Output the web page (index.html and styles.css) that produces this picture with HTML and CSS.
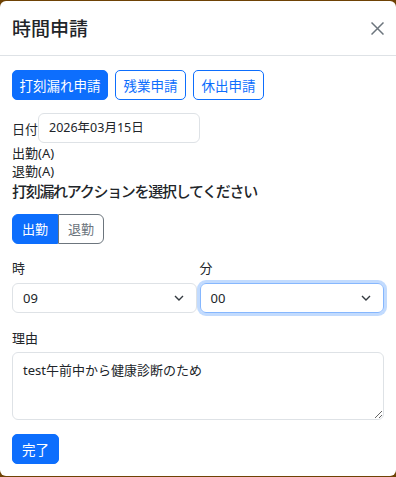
FILE: index.html
```html
<!DOCTYPE html>
<html>
  <head>
    <title>時間申請</title>
    <link rel="stylesheet" href="styles.css">
  </head>
  <body>
    <div class="modal">

      <div class="modal-header">
        <p class="modal-title">時間申請</p>
        <button class="btn-close">
          <svg width="13" height="13" viewBox="0 0 13 13">
            <path d="M0.5 0.5 L12.5 12.5 M12.5 0.5 L0.5 12.5" stroke="#6c757d" stroke-width="1.5" fill="none"/>
          </svg>
        </button>
      </div>

      <div class="modal-body">

        <div class="type-tabs">
          <button class="btn btn-primary btn-wide">打刻漏れ申請</button>
          <button class="btn btn-outline">残業申請</button>
          <button class="btn btn-outline">休出申請</button>
        </div>

        <div class="date-row">
          <span class="date-label">日付</span>
          <div class="date-input">2026年03月15日</div>
        </div>

        <div class="punch-info">
          <p>出勤(A)</p>
          <p>退勤(A)</p>
        </div>

        <p class="section-title">打刻漏れアクションを選択してください</p>

        <div class="btn-group">
          <button class="toggle toggle-active">出勤</button>
          <button class="toggle">退勤</button>
        </div>

        <div class="time-row">
          <div class="time-col">
            <p class="field-label">時</p>
            <div class="select">
              <span>09</span>
              <svg width="10" height="6" viewBox="0 0 10 6">
                <path d="M1 1 L5 5 L9 1" stroke="#343a40" stroke-width="1.4" fill="none"/>
              </svg>
            </div>
          </div>
          <div class="time-col">
            <p class="field-label">分</p>
            <div class="select select-focus">
              <span>00</span>
              <svg width="10" height="6" viewBox="0 0 10 6">
                <path d="M1 1 L5 5 L9 1" stroke="#343a40" stroke-width="1.4" fill="none"/>
              </svg>
            </div>
          </div>
        </div>

        <p class="field-label reason-label">理由</p>
        <textarea class="reason">test午前中から健康診断のため</textarea>

        <button class="btn btn-primary btn-submit">完了</button>

      </div>
    </div>
  </body>
</html>
```

FILE: styles.css
```css
body {
  margin: 0;
  background-color: #6e4204;
  font-family: "Noto Sans", "Noto Sans CJK JP", sans-serif;
  color: #212529;
}

p {
  margin: 0;
}

.modal {
  margin-top: 1px;
  background-color: white;
  border-radius: 6px;
  height: 475px;
  overflow: hidden;
}

.modal-header {
  display: flex;
  justify-content: space-between;
  align-items: center;
  padding: 12px;
  border-bottom: 1px solid #dee2e6;
}

.modal-title {
  font-family: "Noto Sans CJK JP", sans-serif;
  font-size: 19px;
  font-weight: 500;
  line-height: 30px;
}

.btn-close {
  background: transparent;
  border: none;
  padding: 0;
  width: 13px;
  height: 13px;
  display: flex;
}

.modal-body {
  padding: 14px 12px 12px 12px;
}

.type-tabs {
  display: flex;
  gap: 7px;
}

.btn {
  font-family: "Noto Sans CJK JP", sans-serif;
  font-size: 13.5px;
  line-height: 20px;
  padding: 4px 7.5px;
  border-radius: 5px;
  border: 1px solid #0d6efd;
  background-color: white;
  color: #0d6efd;
}

.btn-primary {
  background-color: #0d6efd;
  color: white;
}

.btn-wide {
  padding: 4px 6px;
  width: 96px;
}

.date-row {
  display: flex;
  align-items: center;
  margin-top: 13px;
  font-size: 13px;
}

.date-label {
  width: 26px;
  font-family: "Noto Sans CJK JP", sans-serif;
}

.date-input {
  width: 150px;
  height: 28px;
  line-height: 28px;
  padding-left: 10px;
  border: 1px solid #dee2e6;
  border-radius: 6px;
  font-size: 12.5px;
}

.punch-info {
  margin-top: 1px;
  font-size: 13px;
  line-height: 18px;
}

.section-title {
  font-family: "Noto Sans CJK JP", sans-serif;
  font-size: 15px;
  font-weight: 500;
  line-height: 22px;
  letter-spacing: -1.3px;
}

.btn-group {
  display: flex;
  margin-top: 12px;
}

.toggle {
  font-family: "Noto Sans CJK JP", sans-serif;
  font-size: 13px;
  line-height: 20px;
  width: 46px;
  height: 30px;
  padding: 0;
  background-color: white;
  border: 1px solid #6c757d;
  color: #6c757d;
  border-radius: 0 6px 6px 0;
}

.toggle-active {
  background-color: #0d6efd;
  border-color: #0d6efd;
  color: white;
  border-radius: 6px 0 0 6px;
}

.time-row {
  display: grid;
  grid-template-columns: 1fr 1fr;
  column-gap: 3px;
  margin-top: 15px;
}

.field-label {
  font-family: "Noto Sans CJK JP", sans-serif;
  font-size: 13px;
  line-height: 18px;
}

.select {
  display: flex;
  justify-content: space-between;
  align-items: center;
  margin-top: 6px;
  height: 28px;
  padding: 0 12px 0 10px;
  border: 1px solid #dee2e6;
  border-radius: 6px;
  font-size: 13px;
}

.select-focus {
  border-color: #86b7fe;
  box-shadow: 0 0 0 3px rgba(13, 110, 253, 0.25);
}

.reason-label {
  margin-top: 16px;
}

.reason {
  display: block;
  box-sizing: border-box;
  width: 100%;
  height: 68px;
  margin-top: 5px;
  padding: 8px 10px;
  border: 1px solid #dee2e6;
  border-radius: 6px;
  font-family: "Noto Sans", "Noto Sans CJK JP", sans-serif;
  font-size: 13px;
  line-height: 18px;
  color: #212529;
}

.btn-submit {
  display: block;
  margin-top: 14px;
  width: 47px;
  height: 30px;
  padding: 0;
}
```
